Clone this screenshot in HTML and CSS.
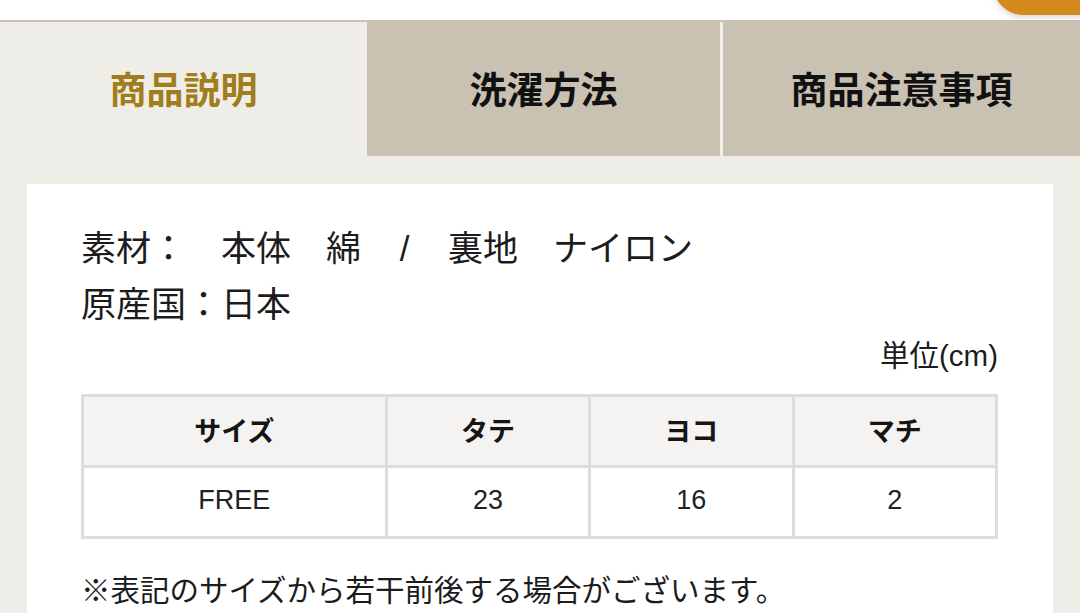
FILE: index.html
```html
<!DOCTYPE html>
<html lang="ja">
<head>
<meta charset="utf-8">
<title>商品説明</title>
<link rel="stylesheet" href="styles.css">
</head>
<body>
<div class="topbar">
  <div class="float-btn"></div>
</div>
<nav class="tabs">
  <div class="tab active">商品説明</div>
  <div class="tab">洗濯方法</div>
  <div class="tab tab-last">商品注意事項</div>
</nav>
<section class="card">
  <p class="spec">素材：　本体　綿　<span class="slash">/</span>　裏地　ナイロン</p>
  <p class="spec">原産国：日本</p>
  <p class="unit">単位(cm)</p>
  <table class="size-table">
    <thead>
      <tr><th class="col-first">サイズ</th><th>タテ</th><th>ヨコ</th><th>マチ</th></tr>
    </thead>
    <tbody>
      <tr><td>FREE</td><td>23</td><td>16</td><td>2</td></tr>
    </tbody>
  </table>
  <p class="note">※表記のサイズから若干前後する場合がございます。</p>
</section>
</body>
</html>
```
FILE: styles.css
```css
html, body {
  margin: 0;
  padding: 0;
}
body {
  background: #efede8;
  font-family: "Liberation Sans", "Noto Sans CJK JP", sans-serif;
  color: #1c1c1c;
  overflow: hidden;
  height: 613px;
}
.topbar {
  position: relative;
  height: 20px;
  background: #ffffff;
}
.float-btn {
  position: absolute;
  left: 993px;
  top: -46px;
  width: 130px;
  height: 61px;
  border-radius: 32px;
  background: #d4891f;
  box-shadow: 0 2px 6px rgba(0, 0, 0, 0.18);
}
.tabs {
  display: grid;
  grid-template-columns: 367px 353px 1fr;
  border-top: 2px solid #cac2b3;
  height: 134px;
}
.tab {
  display: flex;
  align-items: center;
  justify-content: center;
  background: #c9c1b2;
  font-family: "Noto Sans CJK JP", sans-serif;
  font-weight: 700;
  font-size: 37px;
  color: #111111;
  padding-bottom: 2px;
}
.tab.active {
  background: #efede8;
  color: #a27d1c;
}
.tab-last {
  border-left: 3px solid #f1efea;
}
.card {
  margin: 28px 27px 0 27px;
  background: #ffffff;
  padding: 37px 55px 40px 54px;
}
.spec {
  margin: 0;
  font-size: 35px;
  line-height: 56px;
}
.slash {
  display: inline-block;
  width: 17px;
  text-align: center;
}
.unit {
  margin: 2px 0 17px 0;
  text-align: right;
  font-size: 29.5px;
  line-height: 42px;
}
.size-table {
  width: 100%;
  border-collapse: collapse;
  table-layout: fixed;
}
.size-table th,
.size-table td {
  border: 3px solid #dedddc;
  text-align: center;
  padding: 0 0 3px 0;
  height: 65px;
  font-size: 27px;
}
.size-table th {
  background: #f4f3f1;
  font-family: "Noto Sans CJK JP", sans-serif;
  font-weight: 700;
  color: #151515;
}
.size-table td {
  font-weight: 400;
  color: #222222;
}
.col-first {
  width: 32.9%;
}
.note {
  margin: 30px 0 0 0;
  font-size: 29.5px;
  line-height: 44px;
}
```
